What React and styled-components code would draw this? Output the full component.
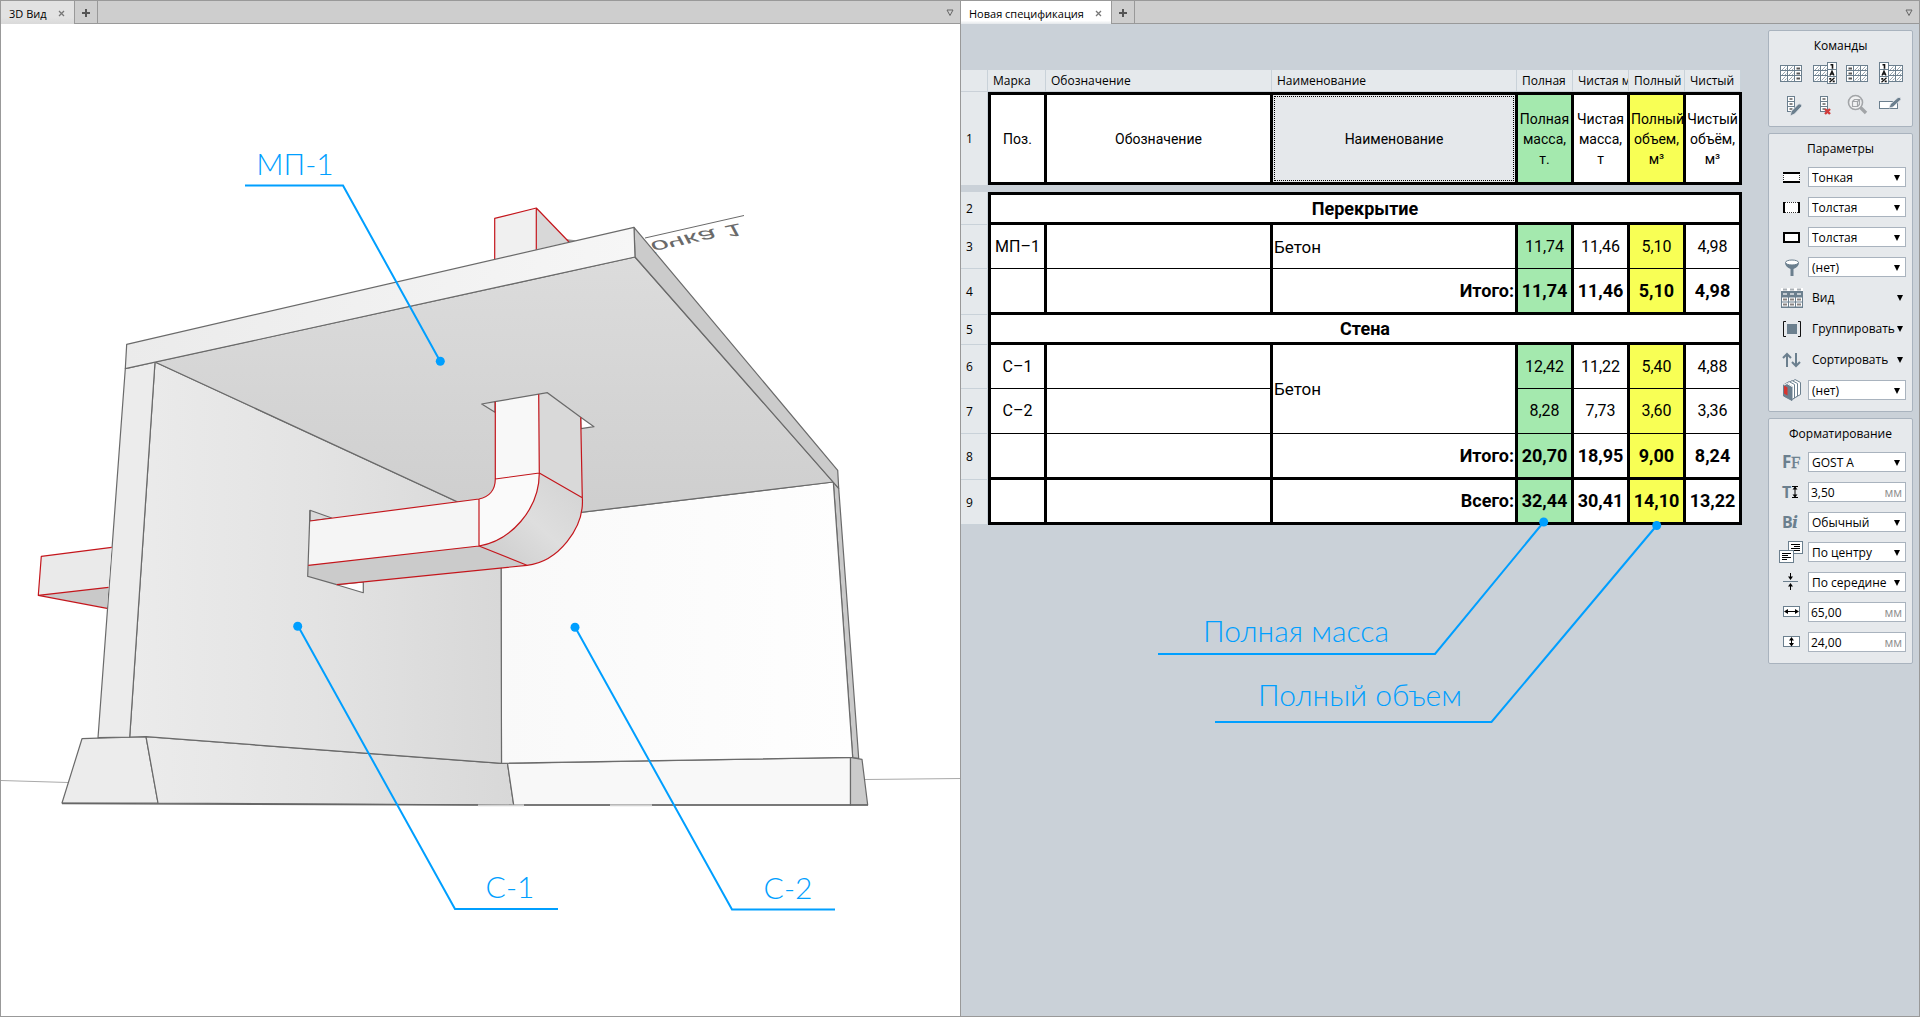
import React, { useState } from "react";
import styled, { createGlobalStyle } from "styled-components";

const SLATE = "#6b7f8e";
const BLUE = "#009fff";

const columns = [
  { label: "Марка", title: "Поз." },
  { label: "Обозначение", title: "Обозначение" },
  { label: "Наименование", title: "Наименование", selected: true },
  { label: "Полная", title: "Полная масса, т.", fill: "green" },
  { label: "Чистая м", title: "Чистая масса, т" },
  { label: "Полный", title: "Полный объем, м³", fill: "yellow" },
  { label: "Чистый", title: "Чистый объём, м³" },
];

const rows = [
  { n: 2, group: "Перекрытие", height: 30, line: 3 },
  { n: 3, mark: "МП–1", name: "Бетон", values: ["11,74", "11,46", "5,10", "4,98"], height: 44, line: 1 },
  { n: 4, mark: "", total: "Итого:", values: ["11,74", "11,46", "5,10", "4,98"], height: 46, line: 3 },
  { n: 5, group: "Стена", height: 30, line: 3 },
  { n: 6, mark: "С–1", name: "Бетон", span: 2, values: ["12,42", "11,22", "5,40", "4,88"], height: 44, line: 1 },
  { n: 7, mark: "С–2", values: ["8,28", "7,73", "3,60", "3,36"], height: 45, line: 1 },
  { n: 8, mark: "", total: "Итого:", values: ["20,70", "18,95", "9,00", "8,24"], height: 46, line: 3 },
  { n: 9, mark: "", total: "Всего:", values: ["32,44", "30,41", "14,10", "13,22"], height: 45, line: 3 },
];

const fills = ["green", null, "yellow", null];

/* ---------- icons ---------- */

function Hatch({ x, y }) {
  return (
    <g>
      <rect x={x} y={y} width="7" height="6" fill="#fff" stroke={SLATE} strokeWidth="1" />
      <path d={`M${x + 1} ${y + 5} l4 -4 M${x + 4} ${y + 5} l2 -2`} stroke="#9aa7b1" strokeWidth="1" />
    </g>
  );
}

function Dash({ x, y }) {
  return (
    <g>
      <rect x={x} y={y} width="7" height="6" fill="#fff" stroke={SLATE} strokeWidth="1" />
      <path d={`M${x + 2} ${y + 3} h3.5`} stroke="#555" strokeWidth="2" />
    </g>
  );
}

function ColumnIcon({ left, tags }) {
  const shift = left ? (tags ? 9 : 7) : 0;
  const tagX = left ? 0.5 : 14.5;
  return (
    <svg width="26" height="24" viewBox="0 0 26 24">
      {[3.5, 8.5, 13.5].map(y => (
        <g key={y}>
          <Hatch x={0.5 + shift} y={y} />
          <Hatch x={7.5 + shift} y={y} />
          {!tags && <Dash x={left ? 0.5 : 14.5} y={y} />}
        </g>
      ))}
      {tags && (
        <g>
          <rect x={tagX} y="0.5" width="9" height="21" fill="#fff" stroke={SLATE} />
          <path d={`M${tagX} 7.5 h9 M${tagX} 14.5 h9`} stroke={SLATE} />
          <g fill="none" stroke="#111" strokeWidth="1.6">
            <path d={`M${tagX + 3} 2.8 h2 v4`} />
            <path d={`M${tagX + 2.5} 13.5 l2 -4.5 l2 4.5 M${tagX + 3} 12 h3`} strokeWidth="1.3" />
            <path d={`M${tagX + 2} 20.2 l5 -4.4`} strokeWidth="1.3" />
            <path d={`M${tagX + 1.8} 16.8 h2 M${tagX + 5.2} 19.4 h2`} strokeWidth="1.7" />
          </g>
        </g>
      )}
    </svg>
  );
}

function Ladder() {
  return (
    <g>
      {[2.5, 7.5, 12.5].map(y => (
        <g key={y}>
          <rect x="7.5" y={y} width="7" height="5" fill="#fff" stroke={SLATE} />
          <path d={`M9.5 ${y + 2.5} h3`} stroke="#555" strokeWidth="1.4" />
        </g>
      ))}
    </g>
  );
}

function EditColumnIcon() {
  return (
    <svg width="26" height="24" viewBox="0 0 26 24">
      <Ladder />
      <path d="M10 22 L11.5 17 L18.5 10 Q21 9 22 12 L14.5 20 Z" fill={SLATE} stroke="#e6e9ec" strokeWidth="0.8" />
    </svg>
  );
}

function DeleteColumnIcon() {
  return (
    <svg width="26" height="24" viewBox="0 0 26 24">
      <Ladder />
      <path d="M12 15 L17 20 M17 15 L12 20" stroke="#d13a3a" strokeWidth="2.4" />
    </svg>
  );
}

function FindIcon() {
  return (
    <svg width="26" height="24" viewBox="0 0 26 24" fill="none" stroke="#a2a5a8">
      <path d="M14 13 L20 19" strokeWidth="3.4" />
      <circle cx="9.5" cy="8.5" r="7" strokeWidth="1.6" fill="#f1f2f3" />
      <path d="M6.5 7.5 h5 v5 h-5 Z M6.5 7.5 l2 -2 h5 l-2 2 M13.5 5.5 v5 l-2 2" strokeWidth="1.2" />
    </svg>
  );
}

function RenameIcon() {
  return (
    <svg width="26" height="24" viewBox="0 0 26 24">
      <rect x="0.5" y="7.5" width="18" height="7" fill="#fff" stroke={SLATE} />
      <path d="M10 14 L11.5 10 L19 3.5 Q22 2.5 22 5.5 L14 13 Z" fill={SLATE} stroke="#e6e9ec" strokeWidth="0.8" />
    </svg>
  );
}

const icons = {
  horizontal: (
    <g>
      <rect x="4" y="5" width="17" height="11" fill="#fff" />
      <path d="M4.5 6 v10 M20.5 6 v10" stroke="#333" strokeDasharray="1 1" />
      <path d="M4 6 h17 M4 15 h17" stroke="#000" strokeWidth="2" />
    </g>
  ),
  vertical: (
    <g>
      <rect x="4" y="5" width="17" height="11" fill="#fff" />
      <path d="M6 5.5 h13 M6 15.5 h13" stroke="#333" strokeDasharray="1 1" />
      <path d="M5 5 v11 M20 5 v11" stroke="#000" strokeWidth="2" />
    </g>
  ),
  outline: <rect x="5" y="6" width="15" height="9" fill="#fff" stroke="#000" strokeWidth="2" />,
  filter: (
    <g>
      <path d="M6 5.5 Q6 9.5 11.5 12 V19 h3 V12 Q20 9.5 20 5.5 Z" fill={SLATE} />
      <ellipse cx="13" cy="5.5" rx="6.5" ry="2.5" fill="#fff" stroke={SLATE} />
    </g>
  ),
  view: (
    <g>
      <path d="M2 0 h22 v3 h-22 Z" fill="#fff" />
      <path d="M4 1.5 h4 M11 1.5 h4 M18 1.5 h4" stroke="#aab0b5" strokeWidth="2" />
      <rect x="2" y="3" width="22" height="17" fill={SLATE} />
      <path d="M4 6 h4 M11 6 h4 M18 6 h4" stroke="#c5ccd2" strokeWidth="2" />
      {[9.5, 14.5].map(y =>
        [3, 10, 17].map(x => (
          <g key={`${x}-${y}`}>
            <rect x={x} y={y} width="6" height="4" fill="#fff" />
            <path d={`M${x + 1} ${y + 2} h4`} stroke="#8a8482" strokeWidth="2" />
          </g>
        ))
      )}
    </g>
  ),
  group: (
    <g fill="none" stroke="#111">
      <path d="M7 2.5 h-2.5 v15 h2.5 M19 2.5 h2.5 v15 h-2.5" />
      <rect x="8" y="5" width="10" height="10" fill={SLATE} stroke="none" />
    </g>
  ),
  sort: (
    <g fill="none" stroke={SLATE} strokeWidth="2">
      <path d="M8 17 V4 M4 8 L8 4 L12 8" />
      <path d="M17 3 V16 M13 12 L17 16 L21 12" />
    </g>
  ),
  classify: (
    <g strokeWidth="1">
      <path d="M13.5 1.5 L16 -0.5 L21.5 2.5 V14.5 L17 17 Z" fill="#fff" stroke={SLATE} />
      <path d="M10.5 2.5 L13 0.5 L18.5 3.5 V16 L14 19 Z" fill="#fff" stroke={SLATE} />
      <path d="M7.5 3.5 L10 1.5 L15.5 4.5 V18 L12 20 Z" fill="#fff" stroke={SLATE} />
      <path d="M4.5 5 L7.5 3 L13 6.5 V20.5 L4.5 16 Z" fill={SLATE} stroke={SLATE} />
      <path d="M5 5.5 l3.5 2 v8 l-3.5 -2 Z" fill="#d6342f" />
      <path d="M5 5 L8 3.5 L13 6.5" fill="none" stroke="#fff" />
    </g>
  ),
  font: (
    <g fill={SLATE} fontSize="17" fontWeight="700">
      <text x="3" y="16" fontFamily="Noto Sans, sans-serif">F</text>
      <text x="12" y="16" fontFamily="Liberation Serif, serif" stroke={SLATE} strokeWidth="0.3" fontWeight="400">F</text>
    </g>
  ),
  size: (
    <g>
      <text x="3" y="16" fill={SLATE} fontSize="16" fontWeight="700" fontFamily="Open Sans, sans-serif">T</text>
      <path d="M13 4.5 h6 M13 15.5 h6 M16 5 v10" stroke="#000" fill="none" />
      <path d="M16 4.5 l2.5 3 h-5 Z M16 15.5 l2.5 -3 h-5 Z" />
    </g>
  ),
  style: (
    <g fill={SLATE} fontSize="16" fontWeight="700">
      <text x="3" y="16" fontFamily="Open Sans, sans-serif">B</text>
      <text x="13" y="16" fontFamily="DejaVu Serif, serif" fontStyle="italic">i</text>
    </g>
  ),
  align: (
    <g fill="#fff" stroke={SLATE}>
      <rect x="9.5" y="-0.5" width="14" height="12" />
      <path d="M12 2.5 h9 M15 4.5 h6 M12 6.5 h9 M15 8.5 h6" stroke="#000" />
      <rect x="0.5" y="8.5" width="14" height="12" />
      <path d="M3 11.5 h9 M3 13.5 h6 M3 15.5 h9 M3 17.5 h5" stroke="#000" />
    </g>
  ),
  middle: (
    <g>
      <path d="M4 9.5 h15" stroke={SLATE} />
      <path d="M11.5 1 v4 M11.5 14 v4" stroke="#000" />
      <path d="M11.5 8 l-2.5 -3.5 h5 Z M11.5 11 l-2.5 3.5 h5 Z" />
    </g>
  ),
  width: (
    <g>
      <rect x="4.5" y="4.5" width="16" height="10" fill="#fff" stroke={SLATE} />
      <path d="M6 9.5 h13" stroke="#000" />
      <path d="M5 9.5 l4 -2.5 v5 Z M20 9.5 l-4 -2.5 v5 Z" />
    </g>
  ),
  height: (
    <g>
      <rect x="4.5" y="4.5" width="16" height="10" fill="#fff" stroke={SLATE} />
      <path d="M12.5 7 v6" stroke="#000" />
      <path d="M12.5 5 l2.5 3.5 h-5 Z M12.5 14.5 l2.5 -3.5 h-5 Z" />
    </g>
  ),
};

function Triangle() {
  return (
    <svg width="8" height="8" viewBox="0 0 8 8">
      <path d="M1 1 H7 L4 7 Z" />
    </svg>
  );
}

function MenuTriangle() {
  return (
    <svg width="8" height="8" viewBox="0 0 8 8">
      <path d="M1 1 H7 L4 6.5 Z" fill="none" stroke="#666" />
    </svg>
  );
}

/* ---------- leader lines ---------- */

function Callout({ points, dot, x, y, children }) {
  return (
    <g>
      <polyline points={points} fill="none" stroke={BLUE} strokeWidth="2" />
      <circle cx={dot[0]} cy={dot[1]} r="4.5" fill={BLUE} />
      <CalloutText x={x} y={y}>{children}</CalloutText>
    </g>
  );
}

/* ---------- 3D view ---------- */

function Scene() {
  return (
    <SceneSvg viewBox="1 24 959 992" preserveAspectRatio="xMinYMin meet">
      <defs>
        <linearGradient id="wallLeft" x1="0" x2="1">
          <stop offset="0" stopColor="#ebebeb" />
          <stop offset="0.5" stopColor="#e3e3e3" />
          <stop offset="1" stopColor="#d8d8d8" />
        </linearGradient>
        <linearGradient id="ceiling" x1="0" y1="0" x2="0" y2="1">
          <stop offset="0" stopColor="#dcdcdc" />
          <stop offset="1" stopColor="#cecece" />
        </linearGradient>
        <linearGradient id="slabFront" x1="0" x2="1">
          <stop offset="0" stopColor="#ebebeb" />
          <stop offset="1" stopColor="#f6f6f6" />
        </linearGradient>
        <linearGradient id="wallRight" x1="0" x2="1">
          <stop offset="0" stopColor="#f9f9f9" />
          <stop offset="1" stopColor="#fefefe" />
        </linearGradient>
        <linearGradient id="elbow" x1="1" y1="0" x2="0" y2="1">
          <stop offset="0" stopColor="#d2d2d2" />
          <stop offset="0.5" stopColor="#dedede" />
          <stop offset="1" stopColor="#cacaca" />
        </linearGradient>
      </defs>

      <path d="M1 780.5 L68 782.5 M865 779.5 L960 778.5" stroke="#aaa" />
      <path d="M645 238 L744 215.5" stroke="#6a6a6a" />
      {/* axis name lies on the ground plane and is seen from below */}
      <AxisText transform="matrix(1.08 -0.23 -0.3 -0.56 632 246)" x="0" y="0">Точка 1</AxisText>

      <g stroke="#6a6a6a" strokeWidth="1.2" strokeLinejoin="round">
        {/* plinth */}
        <path d="M82 738.7 L146 736.7 L158 803 L62 803 Z" fill="#ececec" />
        <path d="M146 736.7 L501.5 763.3 L507.5 763.5 L513.7 805 L158 803 Z" fill="url(#wallLeft)" />
        <path d="M507.5 763.3 L850.5 757.3 V805 H513.7 Z" fill="#f8f8f8" />
        <path d="M850.5 757.3 L862 759.3 L867.7 805 H850.5 Z" fill="#cbcbcb" />
        {/* walls */}
        <path d="M833.3 482 L838.7 488.3 L858.7 758.3 L852.7 757.5 Z" fill="#cacaca" />
        <path d="M501 522 L833.3 482 L852.7 757.3 L501.5 763.3 Z" fill="url(#wallRight)" />
        <path d="M155 362 L501 522 L501.5 763.3 L146 736.7 L129.7 737 Z" fill="url(#wallLeft)" />
        <path d="M125.3 368.7 L155 362 L129.7 737 L98 737.7 Z" fill="#ececec" />
      </g>

      {/* duct above the slab */}
      <path d="M536.3 208 L569 242 L536.7 249.3 Z" fill="#d8d8d8" />
      <path d="M566 239 L577 240.5 L569 242.5 Z" fill="#999" />
      <path d="M494.7 260 V218.3 L536.3 208 L536.7 249.3 Z" fill="#f0f0f0" />
      <DuctLine d="M494.7 260 V218.3 L536.3 208 V250 M536.3 208 L569 242" />

      <g stroke="#6a6a6a" strokeWidth="1.2" strokeLinejoin="round">
        {/* slab */}
        <path d="M155 362 L635 257 L833.3 482 L501 522 Z" fill="url(#ceiling)" />
        <path d="M634 227.3 L837.7 470.3 L838.7 488.3 L635 257 Z" fill="#cbcbcb" />
        <path d="M126.7 344.3 L634 227.3 L635 257 L125.3 368.7 Z" fill="url(#slabFront)" />
        {/* openings */}
        <path d="M310 510.3 L331.7 518 L310 521 Z" fill="#dadada" />
        <path d="M336.7 584.7 L363.3 592.7 V582 Z" fill="#fff" />
        <path d="M481.7 404 L495 401.7 V412.3 Z" fill="#dcdcdc" />
        <path d="M580.7 417.3 L594 426.7 L581 428.7 Z" fill="#fff" />
      </g>

      {/* duct behind the left wall */}
      <path d="M41.3 556.3 L111.7 547.3 L108.5 587.3 L38.3 595.3 Z" fill="#eaeaea" />
      <path d="M38.3 595.3 L108.5 587.3 L107 608.3 Z" fill="#c9c9c9" />
      <DuctLine d="M111.7 547.3 L41.3 556.3 L38.3 595.3 L107 608.3 M38.3 595.3 L108.5 587.3" />

      {/* inner duct with the elbow */}
      <path d="M310 521 L479 499 V546 L308.3 565.3 Z" fill="#f5f5f5" />
      <path d="M308.3 565.3 L479 546 L527 565.3 L336.7 584.7 L307.7 576.3 Z" fill="#cbcbcb" />
      <path d="M495 401.7 L538.7 394.3 L539.3 473 L495.3 479 Z" fill="#f8f8f8" />
      <path d="M538.7 394.3 L547.3 392.7 L580.7 417.3 L582.3 497.7 L539.3 473 Z" fill="#d9d9d9" />
      <path d="M495.3 479 L539.3 473 C539.3 510 510 541 479 546 V499 C489 497 495.3 490 495.3 479 Z" fill="#fafafa" />
      <path
        d="M539.3 473 L582.3 497.7 C584.5 528 558 562 527 565.3 L479 546 C510 541 539.3 510 539.3 473 Z"
        fill="url(#elbow)"
      />
      <path
        d="M310 510.3 L307.7 576.3 L336.7 584.7 M495 401.7 L547.3 392.7 L580.7 417.3"
        fill="none"
        stroke="#6a6a6a"
        strokeWidth="1.2"
      />
      <DuctLine
        d="M310 521 L479 499 C489 497 495.3 490 495.3 479 V401.7 M308.3 565.3 L479 546 V499
           M479 546 C510 541 539.3 510 539.3 473 L538.7 394.3 M495.3 479 L539.3 473 L582.3 497.7
           M479 546 L527 565.3 L336.7 584.7 M527 565.3 C558 562 584.5 528 582.3 497.7 L580.7 417.3"
      />

      <path d="M62 803.5 L478 805 M524 805 H610 M652 805 H868" stroke="#666" strokeWidth="1.6" />
      <path d="M478 805.5 H524 M610 805.5 H652" stroke="#d0d0d0" strokeWidth="1.6" />

      <Callout points="245,185.5 343,185.5 440,361" dot={[440.3, 361.3]} x="295" y="175">МП-1</Callout>
      <Callout points="558,909 455,909 298,626" dot={[297.7, 626.3]} x="510" y="898">С-1</Callout>
      <Callout points="835,909.5 732,909.5 575,627" dot={[575, 627.3]} x="788" y="899">С-2</Callout>
    </SceneSvg>
  );
}

/* ---------- tabs ---------- */

function Tabs({ title, light }) {
  return (
    <TabBar>
      <Tab $light={light}>
        <TabTitle type="button">{title}</TabTitle>
        <CloseButton type="button" aria-label="Закрыть">
          <svg width="7" height="7" viewBox="0 0 7 7">
            <path d="M1 1 L6 6 M6 1 L1 6" stroke="#777" strokeWidth="1.3" />
          </svg>
        </CloseButton>
      </Tab>
      <AddTab type="button" aria-label="Добавить">
        <svg width="8" height="8" viewBox="0 0 8 8">
          <path d="M4 0 V8 M0 4 H8" stroke="#555" strokeWidth="2" />
        </svg>
      </AddTab>
      <TabMenu type="button" aria-label="Список вкладок">
        <MenuTriangle />
      </TabMenu>
    </TabBar>
  );
}

/* ---------- specification ---------- */

function Columns() {
  return (
    <colgroup>
      <Col $width={27} />
      <Col $width={59} />
      <Col $width={226} />
      <Col $width={245} />
      <Col span="4" $width={56} />
    </colgroup>
  );
}

function Specification() {
  return (
    <Sheet>
      <LabelRow>
        <Label />
        {columns.map(c => (
          <Label key={c.label}>{c.label}</Label>
        ))}
      </LabelRow>

      <Grid>
        <Columns />
        <tbody>
          <Row $height={93}>
            <RowNumber>1</RowNumber>
            {columns.map((c, i) => (
              <Cell key={c.title} $first={i === 0} $top $fill={c.fill} $selected={c.selected} $size={14}>
                {c.title}
              </Cell>
            ))}
          </Row>
        </tbody>
      </Grid>

      <Grid $gap>
        <Columns />
        <tbody>
          {rows.map((r, i) => (
            <Row key={r.n} $height={i === 0 ? r.height + 3 : r.height}>
              <RowNumber $line>{r.n}</RowNumber>
              {r.group ? (
                <Cell colSpan="7" $first $top={i === 0} $bold $size={18}>{r.group}</Cell>
              ) : (
                <>
                  <Cell $first $line={r.line} $size={16}>{r.mark}</Cell>
                  <Cell $line={r.line} />
                  {r.n !== 7 && (
                    <Cell
                      rowSpan={r.span}
                      $line={r.line}
                      $align={r.total ? "right" : "left"}
                      $bold={!!r.total}
                      $size={r.total ? 18 : 17}
                    >
                      {r.total || r.name}
                    </Cell>
                  )}
                  {r.values.map((v, j) => (
                    <Cell key={j} $line={r.line} $fill={fills[j]} $bold={!!r.total} $size={r.total ? 18 : 16}>
                      {v}
                    </Cell>
                  ))}
                </>
              )}
            </Row>
          ))}
        </tbody>
      </Grid>

      <Overlay viewBox="961 24 800 720">
        <Callout points="1158,654 1435,654 1543.7,522" dot={[1543.7, 522]} x="1296" y="642">Полная масса</Callout>
        <Callout points="1215,722 1491.5,722 1656.7,525.5" dot={[1656.7, 525.5]} x="1360" y="706">Полный объем</Callout>
      </Overlay>
    </Sheet>
  );
}

/* ---------- side panels ---------- */

function Picker({ icon, label, value }) {
  return (
    <Field>
      <FieldIcon viewBox="0 0 24 20">{icons[icon]}</FieldIcon>
      <SelectBox>
        <Select aria-label={label} defaultValue={value}>
          <option>{value}</option>
        </Select>
        <Triangle />
      </SelectBox>
    </Field>
  );
}

function Menu({ icon, children }) {
  return (
    <Field $menu>
      <FieldIcon viewBox="0 0 24 20">{icons[icon]}</FieldIcon>
      <MenuButton type="button">
        {children}
        <Triangle />
      </MenuButton>
    </Field>
  );
}

function Measure({ icon, label, initial }) {
  const [value, setValue] = useState(initial);
  return (
    <Field>
      <FieldIcon viewBox="0 0 24 20">{icons[icon]}</FieldIcon>
      <InputBox>
        <Input aria-label={label} value={value} onChange={e => setValue(e.target.value)} />
        мм
      </InputBox>
    </Field>
  );
}

function SidePanels() {
  return (
    <Side>
      <Panel $compact>
        <PanelTitle>Команды</PanelTitle>
        <Commands>
          <Command type="button" aria-label="Столбец справа"><ColumnIcon /></Command>
          <Command type="button" aria-label="Формула справа"><ColumnIcon tags /></Command>
          <Command type="button" aria-label="Столбец слева"><ColumnIcon left /></Command>
          <Command type="button" aria-label="Формула слева"><ColumnIcon left tags /></Command>
          <Command type="button" aria-label="Изменить столбец"><EditColumnIcon /></Command>
          <Command type="button" aria-label="Удалить столбец"><DeleteColumnIcon /></Command>
          <Command type="button" aria-label="Показать объект" disabled><FindIcon /></Command>
          <Command type="button" aria-label="Переименовать"><RenameIcon /></Command>
        </Commands>
      </Panel>

      <Panel>
        <PanelTitle>Параметры</PanelTitle>
        <Fields>
          <Picker icon="horizontal" label="Горизонтальные линии" value="Тонкая" />
          <Picker icon="vertical" label="Вертикальные линии" value="Толстая" />
          <Picker icon="outline" label="Рамка" value="Толстая" />
          <Picker icon="filter" label="Фильтр" value="(нет)" />
          <Menu icon="view">Вид</Menu>
          <Menu icon="group">Группировать</Menu>
          <Menu icon="sort">Сортировать</Menu>
          <Picker icon="classify" label="Раздел" value="(нет)" />
        </Fields>
      </Panel>

      <Panel>
        <PanelTitle>Форматирование</PanelTitle>
        <Fields>
          <Picker icon="font" label="Шрифт" value="GOST A" />
          <Measure icon="size" label="Высота текста" initial="3,50" />
          <Picker icon="style" label="Начертание" value="Обычный" />
          <Picker icon="align" label="Выравнивание" value="По центру" />
          <Picker icon="middle" label="Вертикальное выравнивание" value="По середине" />
          <Measure icon="width" label="Ширина" initial="65,00" />
          <Measure icon="height" label="Высота" initial="24,00" />
        </Fields>
      </Panel>
    </Side>
  );
}

export default function App() {
  return (
    <>
      <GlobalStyle />
      <Page>
        <Pane>
          <Tabs title="3D Вид" />
          <Scene />
        </Pane>
        <Pane $last>
          <Tabs title="Новая спецификация" light />
          <Workspace>
            <Specification />
            <SidePanels />
          </Workspace>
        </Pane>
      </Page>
    </>
  );
}

const GlobalStyle = createGlobalStyle`
  * {
    box-sizing: border-box;
  }
  body {
    margin: 0;
    font-family: "Open Sans", "Noto Sans", sans-serif;
    font-size: 12px;
    color: #000;
  }
  button, input, select {
    font: inherit;
    color: inherit;
    margin: 0;
    padding: 0;
    border: 0;
    background: none;
  }
  svg {
    display: block;
  }
`;

const Page = styled.main`
  display: grid;
  grid-template-columns: 1fr 1fr;
  min-height: 100vh;
`;

const Pane = styled.section`
  display: flex;
  flex-direction: column;
  min-width: 0;
  background: #fff;
  border: 1px solid #999;
  border-right-width: ${p => (p.$last ? "1px" : "0")};
`;

const TabBar = styled.div`
  display: flex;
  height: 23px;
  background: #cecece;
  box-shadow: inset 0 -1px #999;
`;

const Tab = styled.div`
  display: flex;
  align-items: center;
  gap: 11px;
  padding: 2px 9px 0 8px;
  border-right: 1px solid #999;
  background: ${p => (p.$light ? "linear-gradient(#fff 85%, #e4e8eb)" : "linear-gradient(#e2e2e2 70%, #dadada)")};
`;

const TabTitle = styled.button`
  font-size: 11px;
  white-space: nowrap;
`;

const CloseButton = styled.button`
  width: 7px;
  height: 7px;
`;

const AddTab = styled.button`
  display: grid;
  place-items: center;
  width: 23px;
  border-right: 1px solid #999;
`;

const TabMenu = styled.button`
  margin-left: auto;
  padding: 0 6px;
`;

const SceneSvg = styled.svg`
  width: 100%;
  flex: 1;
  min-height: 0;
`;

const CalloutText = styled.text`
  font-family: Lato, "Open Sans", sans-serif;
  font-size: 30px;
  font-weight: 300;
  fill: ${BLUE};
  text-anchor: middle;
`;

const AxisText = styled.text`
  font-family: "Liberation Sans", sans-serif;
  font-size: 29px;
  fill: #6a6a6a;
`;

const DuctLine = styled.path`
  fill: none;
  stroke: #c4161c;
  stroke-width: 1.2;
  stroke-linejoin: round;
`;

const Workspace = styled.div`
  display: flex;
  justify-content: space-between;
  align-items: flex-start;
  flex: 1;
  background: #cad1d8;
`;

const Sheet = styled.div`
  position: relative;
  width: 781px;
  padding-top: 46px;
`;

const LabelRow = styled.div`
  display: grid;
  grid-template-columns: 27px 58px 226px 245px repeat(4, 56px);
  height: 22px;
  border-bottom: 1px solid #cad1d8;
`;

const Label = styled.div`
  padding: 0 0 0 5px;
  border-right: 1px solid #c9d2d9;
  background: #e5e9ec;
  line-height: 21px;
  white-space: nowrap;
  overflow: hidden;
`;

const Grid = styled.table`
  width: 100%;
  margin-top: ${p => (p.$gap ? "7px" : "0")};
  table-layout: fixed;
  border-collapse: separate;
  border-spacing: 0;
`;

const Col = styled.col`
  width: ${p => p.$width}px;
`;

const Row = styled.tr`
  height: ${p => p.$height}px;
`;

const RowNumber = styled.th`
  padding: 0 0 0 5px;
  background: #e5e9ec;
  border-right: 1px solid #c9d2d9;
  border-bottom: ${p => (p.$line ? "1px solid #c9d2d9" : "0")};
  font-weight: 400;
  text-align: left;
`;

const fillColors = { green: "#a4e9ae", yellow: "#f8ff55" };

const Cell = styled.td`
  position: relative;
  padding: 0 1px;
  background: ${p => (p.$selected ? "#e5e8eb" : fillColors[p.$fill] || "#fff")};
  border: 0 solid #000;
  border-width: ${p => `${p.$top ? 3 : 0}px 3px ${p.$line || 3}px ${p.$first ? 3 : 0}px`};
  font-family: Roboto, sans-serif;
  font-size: ${p => p.$size}px;
  font-weight: ${p => (p.$bold ? 700 : 400)};
  line-height: 20px;
  text-align: ${p => p.$align || "center"};

  &::after {
    content: "";
    display: ${p => (p.$selected ? "block" : "none")};
    position: absolute;
    inset: 1px;
    border: 1px dotted #000;
  }
`;

const Overlay = styled.svg`
  position: absolute;
  top: 0;
  left: 0;
  width: 800px;
  height: 720px;
  pointer-events: none;
`;

const Side = styled.aside`
  display: flex;
  flex-direction: column;
  gap: 6px;
  width: 145px;
  margin: 6px 6px 6px 0;
`;

const Panel = styled.section`
  padding-bottom: ${p => (p.$compact ? 8 : 11)}px;
  background: #e6e9ec;
  border: 1px solid #a9b3be;
  border-radius: 2px;
`;

const PanelTitle = styled.h2`
  margin: 0;
  padding: 5px 0 6px;
  font-size: 12px;
  font-weight: 400;
  line-height: 20px;
  text-align: center;
`;

const Commands = styled.div`
  display: grid;
  grid-template-columns: repeat(4, 26px);
  gap: 8px 7px;
  padding-left: 11px;
`;

const Command = styled.button`
  height: 24px;
`;

const Fields = styled.div`
  display: flex;
  flex-direction: column;
  gap: 10px;
  padding: 2px 6px 0 10px;
`;

const Field = styled.div`
  display: grid;
  grid-template-columns: 24px minmax(0, 1fr);
  gap: 5px;
  align-items: center;
  height: ${p => (p.$menu ? 21 : 20)}px;
`;

const FieldIcon = styled.svg`
  width: 24px;
  height: 20px;
  overflow: visible;
`;

const SelectBox = styled.div`
  position: relative;
  height: 20px;

  svg {
    position: absolute;
    top: 7px;
    right: 5px;
    pointer-events: none;
  }
`;

const Select = styled.select`
  display: block;
  width: 100%;
  height: 20px;
  padding: 0 3px;
  appearance: none;
  background: #fff;
  border: 1px solid #a9b3be;
`;

const MenuButton = styled.button`
  display: flex;
  align-items: center;
  justify-content: space-between;
  padding: 0 2px 0 4px;
`;

const InputBox = styled.label`
  display: flex;
  align-items: center;
  height: 20px;
  padding: 0 3px 0 2px;
  background: #fff;
  border: 1px solid #a9b3be;
  color: #8f8f8f;
`;

const Input = styled.input`
  flex: 1;
  width: 40px;
  color: #000;
  outline: none;
`;
